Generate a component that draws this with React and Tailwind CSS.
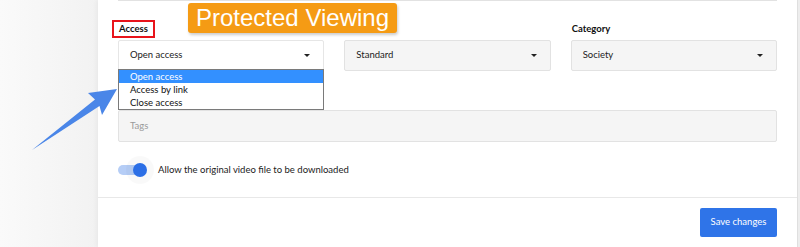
import React from 'react';

const Caret = () => (
  <svg width="6" height="3" viewBox="0 0 6 3" className="shrink-0">
    <path d="M0 0h6L3 3z" fill="#222" />
  </svg>
);

const SelectBox = ({ value, open = false }) => (
  <div
    className={`flex items-center justify-between h-[31px] pl-[11px] pr-[13px] border rounded-[2px] text-[#222] ${
      open ? 'bg-white border-[#e6e6e6]' : 'bg-[#f5f5f5] border-[#e2e2e2]'
    }`}
  >
    <span>{value}</span>
    <Caret />
  </div>
);

export default function App() {
  const options = ['Open access', 'Access by link', 'Close access'];

  return (
    <div
      className="relative flex w-[800px] h-[247px] overflow-hidden bg-[#f8f8f8] text-[9.5px]"
      style={{ fontFamily: 'Lato, "Noto Sans", sans-serif' }}
    >
      {/* left gutter */}
      <div className="w-[98px] shrink-0 bg-gradient-to-r from-[#fafafa] to-[#f2f2f2]" />

      {/* card */}
      <div className="relative w-[699px] shrink-0 bg-white flex flex-col shadow-[-2px_0_4px_rgba(0,0,0,0.04)]">
        <div className="px-5">
          <div className="h-px bg-[#e2e2e2]" />

          <div className="grid grid-cols-3 gap-5 pt-[19px]">
            <div className="relative">
              <div className="h-[18px] flex items-center">
                <span className="inline-flex items-center h-[18px] -ml-[6px] px-[5px] border-2 border-[#e8141b] font-bold text-[#111]">
                  Access
                </span>
              </div>
              <div className="mt-[2px] relative">
                <SelectBox value="Open access" open />
                <div className="absolute left-0 top-[29px] w-[206px] bg-white border border-[#7a7a7a] z-10">
                  {options.map((o, i) => (
                    <div
                      key={o}
                      className={`h-[13px] leading-[13px] pl-[11px] ${
                        i === 0 ? 'bg-[#3390ff] text-white' : 'text-[#111]'
                      }`}
                    >
                      {o}
                    </div>
                  ))}
                </div>
              </div>
            </div>
            <div>
              <div className="h-[18px]" />
              <div className="mt-[2px]">
                <SelectBox value="Standard" />
              </div>
            </div>
            <div>
              <div className="h-[18px] flex items-center font-bold text-[#111] pl-px">Category</div>
              <div className="mt-[2px]">
                <SelectBox value="Society" />
              </div>
            </div>
          </div>

          {/* tags */}
          <div className="mt-[39px] h-[32px] flex items-center pl-[11px] bg-[#f5f5f5] border border-[#e2e2e2] rounded-[2px] text-[#9a9a9a]">
            Tags
          </div>

          {/* toggle */}
          <div className="mt-[20px] h-[16px] flex items-center">
            <div className="relative w-[30px] h-[16px] flex items-center">
              <div className="w-[28px] h-[10px] rounded-full bg-[#b5cdf6]" />
              <div className="absolute left-[15px] top-px w-[14px] h-[14px] rounded-full bg-[#2c6fe6] shadow-[0_0_0_7px_rgba(0,0,0,0.025)]" />
            </div>
            <span className="ml-[10px] text-[#222]">Allow the original video file to be downloaded</span>
          </div>
        </div>

        <div className="mt-[19px] h-px bg-[#e8e8e8]" />

        <div className="flex justify-end px-5 pt-[10px]">
          <button className="h-[29px] w-[77px] rounded-[2px] bg-[#2f74e8] text-white">Save changes</button>
        </div>
      </div>

      {/* right strip */}
      <div className="flex-1 bg-[#ededed] border-l border-[#e0e0e0]" />

      {/* annotation label */}
      <div
        className="absolute left-[188px] top-[3px] w-[209px] h-[30px] flex items-center justify-center rounded-[3px] bg-[#f59b14] text-white text-[24px] shadow-[1px_2px_3px_rgba(0,0,0,0.2)]"
        style={{ fontFamily: '"Liberation Sans", Arial, sans-serif' }}
      >
        Protected Viewing
      </div>

      {/* annotation arrow */}
      <svg className="absolute left-0 top-0" width="800" height="247" viewBox="0 0 800 247">
        <polygon points="32,150 95,99.5 88,93 117,89 102,115 99.5,106" fill="#4a86e8" />
      </svg>
    </div>
  );
}
